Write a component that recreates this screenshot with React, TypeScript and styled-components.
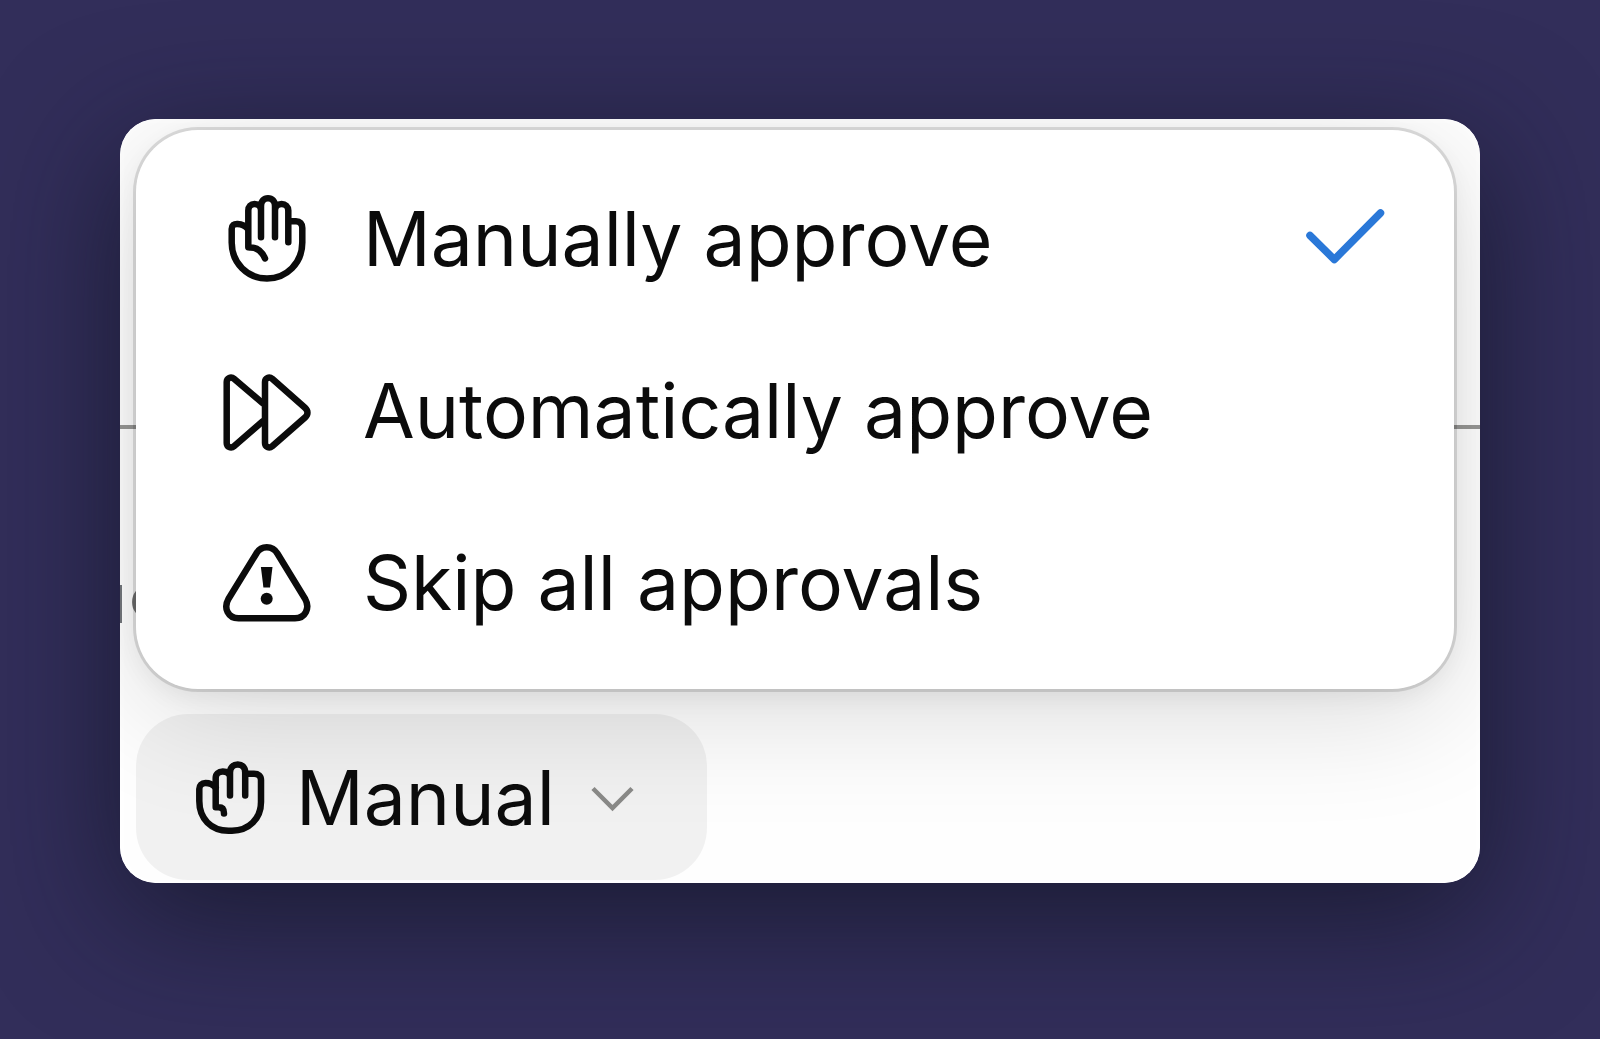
import React from "react";
import styled, { createGlobalStyle } from "styled-components";

const GlobalStyle = createGlobalStyle`
  *, *::before, *::after { box-sizing: border-box; }
  body {
    margin: 0;
    background: #322e5a;
    color: #0b0b0b;
    font-family: Inter, "Liberation Sans", sans-serif;
  }
`;

const Page = styled.main`
  min-height: 100vh;
  padding: 119px 120px 156px;
  overflow: hidden;
`;

const Shadow = styled.div`
  border-radius: 36px;
  box-shadow: 0 32px 128px rgba(16, 20, 34, 0.72);
`;

const Panel = styled.section`
  position: relative;
  z-index: 0;
  overflow: hidden;
  padding: 11px 26px 3px 16px;
  border-radius: 36px;
  background: #fefefe;

  &::after {
    content: "";
    position: absolute;
    inset: 0;
    border: 4px solid #fff;
    border-bottom-width: 2px;
    border-radius: 36px;
    z-index: -2;
  }
`;

const Divider = styled.hr`
  position: absolute;
  z-index: -1;
  top: 306px;
  left: 0;
  right: 0;
  height: 4px;
  margin: 0;
  border: 0;
  background: #979795;
`;

const Behind = styled.div`
  position: absolute;
  z-index: -1;
  top: 466px;
  left: 0;
  width: 42px;
  height: 38px;
  border-left: 2px solid #73777c;

  &::after {
    content: "";
    position: absolute;
    top: 2px;
    left: 10px;
    width: 24px;
    height: 30px;
    border: 6px solid #777;
    border-radius: 50%;
  }
`;

const Menu = styled.div`
  display: flex;
  flex-direction: column;
  padding: 23px 0 20px;
  border-radius: 62px;
  background: #fff;
  box-shadow:
    0 0 0 3px rgba(0, 0, 0, 0.12),
    0 8px 24px rgba(0, 0, 0, 0.06),
    0 24px 120px rgba(0, 0, 0, 0.14);
`;

const Item = styled.button`
  display: flex;
  align-items: center;
  gap: 48px;
  height: 172px;
  padding: 0 66px 0 83px;
  border: 0;
  background: none;
  color: inherit;
  font: inherit;
  text-align: left;
`;

const Label = styled.span`
  flex: 1;
  font-size: 75px;
  line-height: 96px;
  white-space: nowrap;
`;

const Trigger = styled.button`
  display: flex;
  align-items: center;
  gap: 26px;
  width: fit-content;
  height: 166px;
  margin: 25px 0 0;
  padding: 2px 71px 0 54px;
  border: 0;
  border-radius: 52px;
  background: rgba(0, 0, 0, 0.05);
  color: inherit;
  font: inherit;
`;

const TriggerLabel = styled(Label)`
  margin-right: 7px;
`;

const Glyph = styled.svg`
  flex: none;
  fill: none;
  stroke: currentColor;
  stroke-width: 6.5;
  stroke-linecap: round;
  stroke-linejoin: round;
`;

const CheckGlyph = styled(Glyph)`
  color: #2a78d8;
  stroke-width: 7.5;
`;

const ChevronGlyph = styled(Glyph)`
  color: #888886;
  stroke-width: 4.5;
  stroke-linecap: butt;
  stroke-linejoin: miter;
`;

const HandIcon = () => (
  <Glyph width="96" height="96" viewBox="0 0 96 96" aria-hidden="true">
    <path d="M28.5 37.5C26 34.5 22.5 33.3 18.5 33C15 32.8 12.7 34.5 12.7 38V51.5C12.7 72 28.5 87.5 48 87.5S83.3 72 83.3 51.5V37C83.3 32.5 81 30.2 77 30.2H70" />
    <path d="M46 67.5C43 60.5 38.5 56.2 31 56.4L29.3 56.2V19.5C29.3 15.5 31.8 13 35.6 13S42 15.5 42 19.5V46.2V15C42 10 45 7.2 49 7.2S56 10 56 15V46.2V19.5C56 15.5 58.8 13 62.6 13S69.3 15.5 69.3 19.5V51.2" />
  </Glyph>
);

const ForwardIcon = () => (
  <Glyph width="96" height="96" viewBox="0 0 96 96" aria-hidden="true">
    <path d="M43.5 40L15 15.8C12 13.3 7.7 15 7.7 19V80C7.7 84 12 85.8 15 83.3L43.5 58.5" />
    <path d="M46 19C46 15 50.2 13.3 53.2 15.8L86 44.8C89.3 47.8 89.3 51.5 86 54.5L53.2 83.3C50.2 85.8 46 84 46 80Z" />
  </Glyph>
);

const WarningIcon = () => (
  <Glyph width="96" height="96" viewBox="0 2 96 96" aria-hidden="true">
    <path d="M37.4 20.5C42 12.2 53.5 12.2 58.4 20.5L86.2 66C91.2 75 86.5 85.3 76 85.3H19.5C9 85.3 4.3 75 9.4 66Z" />
    <path d="M41.9 34H53.5L51 54.5H44.4Z" fill="currentColor" stroke="none" />
    <circle cx="47.7" cy="65.8" r="6" fill="currentColor" stroke="none" />
  </Glyph>
);

const SmallHandIcon = () => (
  <Glyph width="80" height="80" viewBox="0 0 80 80" aria-hidden="true">
    <path d="M25.7 29.5C23 26.5 19.5 25 15.5 25C11.5 25 9.3 27.5 9.3 31V43C9.3 60.5 21 72.7 38.5 72.7H42C59 72.7 71 60.5 71 44V22C71 18 68.5 15.8 64 15.8H56.5" />
    <path d="M34 55.5C34 51.5 32.5 49.3 28.5 49.3H25.7V20C25.7 16 28.3 13.6 32.8 13.6C37 13.6 40 15.8 40 19.5V37.5V14.5C40 9.5 43 6.6 47.8 6.6C52.5 6.6 55.2 9.5 55.2 14.5V37.5" />
  </Glyph>
);

const CheckIcon = () => (
  <CheckGlyph width="84" height="76" viewBox="0 0 84 76" aria-hidden="true">
    <path d="M6 34.5L30.3 58.5L76.5 12" />
  </CheckGlyph>
);

const ChevronIcon = () => (
  <ChevronGlyph width="48" height="48" viewBox="0 0 48 48" aria-hidden="true">
    <path d="M5 14.5L24.5 34L44 14.5" />
  </ChevronGlyph>
);

const options = [
  { label: "Manually approve", Icon: HandIcon },
  { label: "Automatically approve", Icon: ForwardIcon },
  { label: "Skip all approvals", Icon: WarningIcon },
];

export default function App() {
  const [selected, setSelected] = React.useState(0);
  return (
    <Page>
      <GlobalStyle />
      <Shadow>
        <Panel>
          <Divider />
          <Behind />
          <Menu role="menu" aria-label="Approval mode">
            {options.map(({ label, Icon }, index) => (
              <Item
                key={label}
                type="button"
                role="menuitemradio"
                aria-checked={selected === index}
                onClick={() => setSelected(index)}
              >
                <Icon />
                <Label>{label}</Label>
                {selected === index && <CheckIcon />}
              </Item>
            ))}
          </Menu>
          <Trigger type="button" aria-haspopup="menu" aria-expanded="true">
            <SmallHandIcon />
            <TriggerLabel>Manual</TriggerLabel>
            <ChevronIcon />
          </Trigger>
        </Panel>
      </Shadow>
    </Page>
  );
}
